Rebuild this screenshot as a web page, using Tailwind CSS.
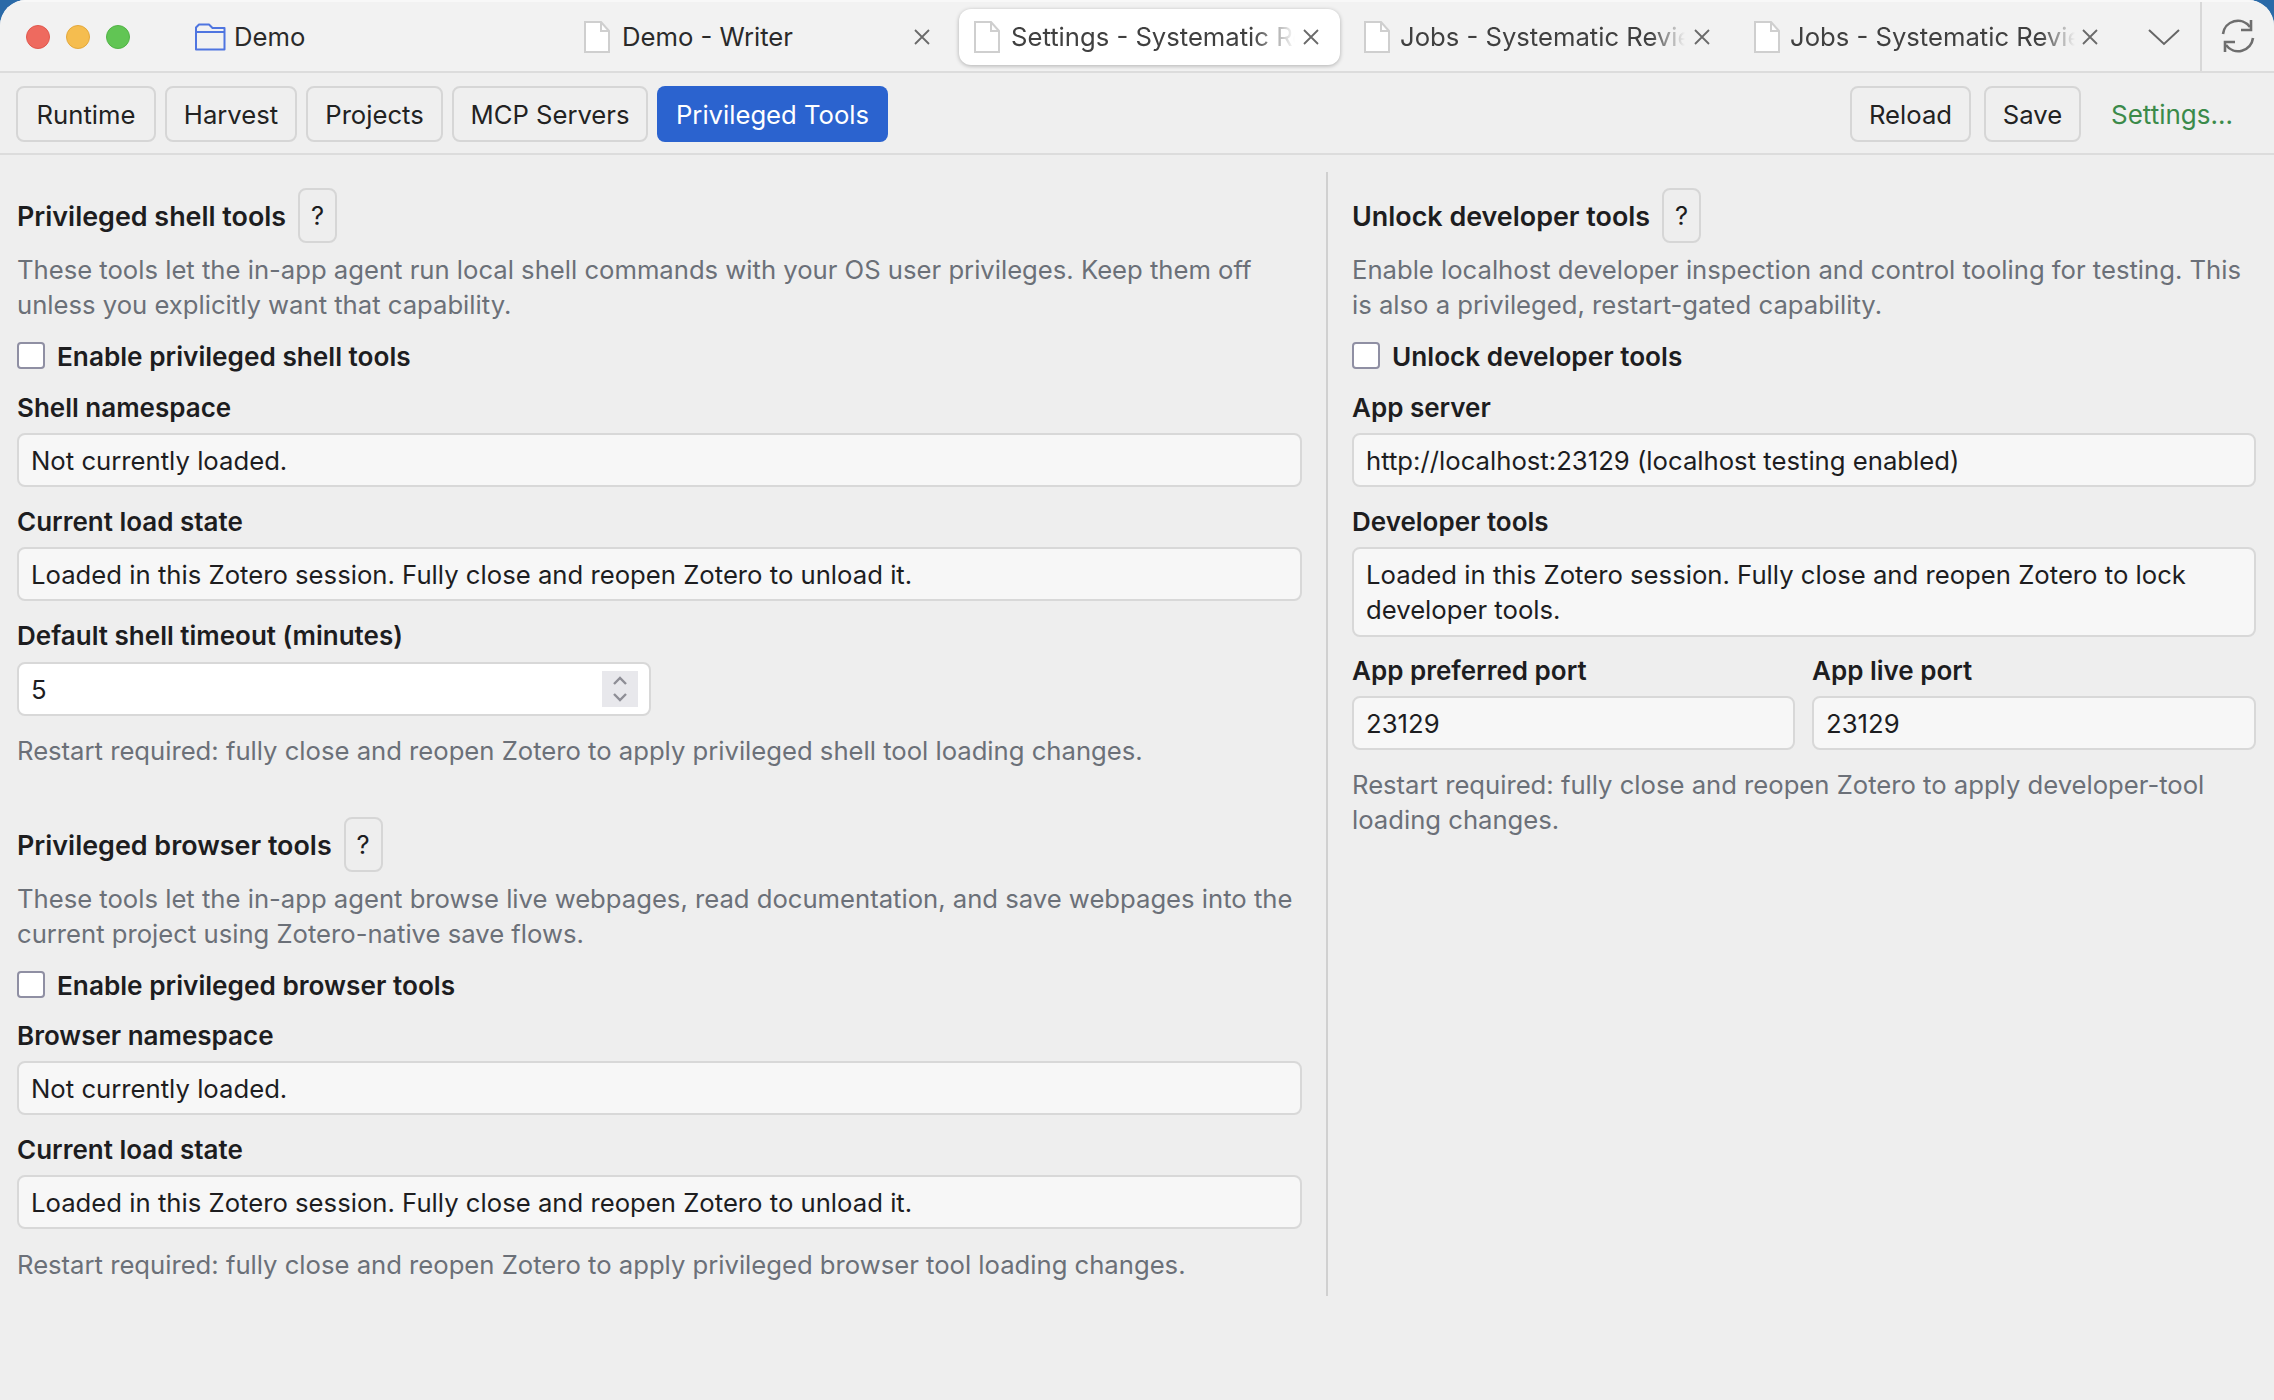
<!DOCTYPE html>
<html lang="en">
<head>
<meta charset="UTF-8">
<title>Settings - Systematic Review</title>
<script src="https://cdn.jsdelivr.net/npm/@tailwindcss/browser@4"></script>
</head>
<body class="bg-[#2a6aa8] font-['Inter',sans-serif] text-[25.65px] leading-[35px] text-[#1d1d1f] w-[2274px] h-[1400px] overflow-hidden">
<div class="w-full h-full rounded-t-[26px] overflow-hidden bg-[#eeeeee] flex flex-col">

  <!-- title bar -->
  <div class="h-[73px] shrink-0 bg-[#f2f2f2] border-b-2 border-[#dcdcdc] border-t-2 border-t-[#f8f8f8] flex items-center relative">
    <div class="flex gap-[16px] pl-[26px] w-[179px] shrink-0">
      <span class="w-[24px] h-[24px] rounded-full bg-[#ee6a5f] border border-[#e0584e]"></span>
      <span class="w-[24px] h-[24px] rounded-full bg-[#f5bd4f] border border-[#e3a83c]"></span>
      <span class="w-[24px] h-[24px] rounded-full bg-[#61c554] border border-[#52b347]"></span>
    </div>
    <div class="flex gap-[9px]">
      <!-- Demo -->
      <div class="w-[381px] h-[56px] flex items-center pl-[15px]">
        <svg class="w-[32px] h-[28px] shrink-0" viewBox="0 0 32 28" fill="none" stroke="#4f75e0" stroke-width="2"><path d="M2 26.5V4.5L5 1.5H15L18.5 5H30.5V26.5H2Z" stroke-linejoin="round"/><path d="M2 9H30.5"/></svg>
        <span class="ml-[8px] text-[#2a2a2a]">Demo</span>
      </div>
      <!-- Demo - Writer -->
      <div class="w-[381px] h-[56px] flex items-center pl-[15px] relative">
        <svg class="w-[26px] h-[32px] shrink-0" viewBox="0 0 26 32" fill="#fff" stroke="#cfcfcf" stroke-width="2"><path d="M1 1H17L25 10V31H1Z"/><path d="M17 1V10H25" fill="none"/></svg>
        <span class="ml-[12px] text-[#2a2a2a]">Demo - Writer</span>
        <svg class="w-[16px] h-[16px] absolute left-[345px] top-[20px]" viewBox="0 0 16 16" stroke="#6a6a6a" stroke-width="1.8"><path d="M1 1L15 15M15 1L1 15"/></svg>
      </div>
      <!-- Settings, active -->
      <div class="w-[381px] h-[56px] flex items-center pl-[15px] relative bg-white rounded-[12px] shadow-[0_1px_4px_rgba(0,0,0,0.28)]">
        <svg class="w-[26px] h-[32px] shrink-0" viewBox="0 0 26 32" fill="#fff" stroke="#cfcfcf" stroke-width="2"><path d="M1 1H17L25 10V31H1Z"/><path d="M17 1V10H25" fill="none"/></svg>
        <span class="ml-[11px] w-[284px] overflow-hidden whitespace-nowrap text-[#404040] [mask-image:linear-gradient(to_right,black_85%,transparent)]">Settings - Systematic Review</span>
        <svg class="w-[16px] h-[16px] absolute left-[344px] top-[20px]" viewBox="0 0 16 16" stroke="#6a6a6a" stroke-width="1.8"><path d="M1 1L15 15M15 1L1 15"/></svg>
      </div>
      <!-- Jobs -->
      <div class="w-[381px] h-[56px] flex items-center pl-[15px] relative">
        <svg class="w-[26px] h-[32px] shrink-0" viewBox="0 0 26 32" fill="#fff" stroke="#cfcfcf" stroke-width="2"><path d="M1 1H17L25 10V31H1Z"/><path d="M17 1V10H25" fill="none"/></svg>
        <span class="ml-[10px] w-[285px] overflow-hidden whitespace-nowrap text-[#404040] [mask-image:linear-gradient(to_right,black_88%,transparent)]">Jobs - Systematic Review</span>
        <svg class="w-[16px] h-[16px] absolute left-[345px] top-[20px]" viewBox="0 0 16 16" stroke="#6a6a6a" stroke-width="1.8"><path d="M1 1L15 15M15 1L1 15"/></svg>
      </div>
      <!-- Jobs -->
      <div class="w-[381px] h-[56px] flex items-center pl-[15px] relative">
        <svg class="w-[26px] h-[32px] shrink-0" viewBox="0 0 26 32" fill="#fff" stroke="#cfcfcf" stroke-width="2"><path d="M1 1H17L25 10V31H1Z"/><path d="M17 1V10H25" fill="none"/></svg>
        <span class="ml-[10px] w-[285px] overflow-hidden whitespace-nowrap text-[#404040] [mask-image:linear-gradient(to_right,black_88%,transparent)]">Jobs - Systematic Review</span>
        <svg class="w-[16px] h-[16px] absolute left-[343px] top-[20px]" viewBox="0 0 16 16" stroke="#6a6a6a" stroke-width="1.8"><path d="M1 1L15 15M15 1L1 15"/></svg>
      </div>
    </div>
    <svg class="w-[32px] h-[18px] absolute left-[2148px] top-[26px]" viewBox="0 0 32 18" fill="none" stroke="#666" stroke-width="2"><path d="M1 2L16 16L31 2"/></svg>
    <div class="absolute left-[2200px] top-0 bottom-0 w-[2px] bg-[#d8d8d8]"></div>
    <svg class="w-[36px] h-[36px] absolute left-[2220px] top-[16px]" viewBox="0 0 36 36" fill="none" stroke="#6e6e6e" stroke-width="2.6"><path d="M3 16A15 15 0 0 1 30 9"/><path d="M31 2V12H21"/><path d="M33 20A15 15 0 0 1 6 27"/><path d="M5 34V24H15"/></svg>
  </div>

  <!-- toolbar -->
  <div class="h-[82px] shrink-0 border-b-2 border-[#dcdcdc] bg-[#efefef] flex items-center pt-[2px] pl-[16px] pr-[41px] gap-[9px]">
    <button class="h-[56px] w-[140px] rounded-[8px] border-2 border-[#d6d6d6] text-[#222]">Runtime</button>
    <button class="h-[56px] w-[132px] rounded-[8px] border-2 border-[#d6d6d6] text-[#222]">Harvest</button>
    <button class="h-[56px] w-[137px] rounded-[8px] border-2 border-[#d6d6d6] text-[#222]">Projects</button>
    <button class="h-[56px] w-[196px] rounded-[8px] border-2 border-[#d6d6d6] text-[#222]">MCP Servers</button>
    <button class="h-[56px] w-[231px] rounded-[8px] bg-[#2b63cf] text-white">Privileged Tools</button>
    <button class="h-[56px] w-[121px] rounded-[8px] border-2 border-[#d6d6d6] text-[#222] ml-auto">Reload</button>
    <button class="h-[56px] w-[97px] rounded-[8px] border-2 border-[#d6d6d6] text-[#222] ml-[4px]">Save</button>
    <span class="text-[#3b8a4a] text-[26px] ml-[21px]">Settings...</span>
  </div>

  <!-- panels -->
  <div class="flex pl-[17px] pr-[18px] pt-[17px]">
    <!-- left column -->
    <div class="w-[1285px] pt-[16px] flex flex-col">
      <div class="flex items-center h-[55px] gap-[12px]">
        <h2 class="font-semibold text-[26.9px] pt-[2px]">Privileged shell tools</h2>
        <button class="w-[39px] h-[55px] rounded-[8px] border-2 border-[#d6d6d6]">?</button>
      </div>
      <p class="mt-[9px] text-[#6b7078]">These tools let the in-app agent run local shell commands with your OS user privileges. Keep them off unless you explicitly want that capability.</p>
      <label class="mt-[16px] h-[35px] flex items-center gap-[12px] font-semibold text-[26.2px]">
        <span class="w-[28px] h-[27px] rounded-[4px] bg-white border-2 border-[#8f8fa3]"></span>
        <span class="pt-[1px]">Enable privileged shell tools</span>
      </label>
      <div class="mt-[17px] font-semibold text-[26px]">Shell namespace</div>
      <div class="mt-[8px] h-[54px] flex items-center px-[12px] bg-[#f7f7f7] border-2 border-[#d8d8d8] rounded-[8px] text-[25.7px]">Not currently loaded.</div>
      <div class="mt-[17px] font-semibold text-[26px]">Current load state</div>
      <div class="mt-[8px] h-[54px] flex items-center px-[12px] bg-[#f7f7f7] border-2 border-[#d8d8d8] rounded-[8px] text-[25.7px]">Loaded in this Zotero session. Fully close and reopen Zotero to unload it.</div>
      <div class="mt-[17px] font-semibold text-[26px]">Default shell timeout (minutes)</div>
      <div class="mt-[9px] w-[634px] h-[54px] flex items-center justify-between pl-[12px] pr-[11px] bg-white border-2 border-[#d8d8d8] rounded-[8px]">
        5
        <span class="w-[36px] h-[36px] bg-[#e8e8ec] flex items-center justify-center">
          <svg class="w-[16px] h-[28px]" viewBox="0 0 16 28" fill="none" stroke="#8e8e96" stroke-width="2.4"><path d="M2 9L8 3L14 9"/><path d="M2 19L8 25L14 19"/></svg>
        </span>
      </div>
      <p class="mt-[17px] text-[#6b7078]">Restart required: fully close and reopen Zotero to apply privileged shell tool loading changes.</p>

      <div class="mt-[49px] flex items-center h-[55px] gap-[12px]">
        <h2 class="font-semibold text-[26.9px] pt-[2px]">Privileged browser tools</h2>
        <button class="w-[39px] h-[55px] rounded-[8px] border-2 border-[#d6d6d6]">?</button>
      </div>
      <p class="mt-[9px] text-[#6b7078]">These tools let the in-app agent browse live webpages, read documentation, and save webpages into the current project using Zotero-native save flows.</p>
      <label class="mt-[16px] h-[35px] flex items-center gap-[12px] font-semibold text-[26.2px]">
        <span class="w-[28px] h-[27px] rounded-[4px] bg-white border-2 border-[#8f8fa3]"></span>
        <span class="pt-[1px]">Enable privileged browser tools</span>
      </label>
      <div class="mt-[16px] font-semibold text-[26px]">Browser namespace</div>
      <div class="mt-[8px] h-[54px] flex items-center px-[12px] bg-[#f7f7f7] border-2 border-[#d8d8d8] rounded-[8px] text-[25.7px]">Not currently loaded.</div>
      <div class="mt-[17px] font-semibold text-[26px]">Current load state</div>
      <div class="mt-[8px] h-[54px] flex items-center px-[12px] bg-[#f7f7f7] border-2 border-[#d8d8d8] rounded-[8px] text-[25.7px]">Loaded in this Zotero session. Fully close and reopen Zotero to unload it.</div>
      <p class="mt-[18px] text-[#6b7078]">Restart required: fully close and reopen Zotero to apply privileged browser tool loading changes.</p>
    </div>

    <div class="w-[2px] h-[1124px] bg-[#d0d0d0] ml-[24px] shrink-0"></div>

    <!-- right column -->
    <div class="ml-[24px] flex-1 pt-[16px] flex flex-col">
      <div class="flex items-center h-[55px] gap-[12px]">
        <h2 class="font-semibold text-[26.9px] pt-[2px]">Unlock developer tools</h2>
        <button class="w-[39px] h-[55px] rounded-[8px] border-2 border-[#d6d6d6]">?</button>
      </div>
      <p class="mt-[9px] text-[#6b7078]">Enable localhost developer inspection and control tooling for testing. This is also a privileged, restart-gated capability.</p>
      <label class="mt-[16px] h-[35px] flex items-center gap-[12px] font-semibold text-[26.2px]">
        <span class="w-[28px] h-[27px] rounded-[4px] bg-white border-2 border-[#8f8fa3]"></span>
        <span class="pt-[1px]">Unlock developer tools</span>
      </label>
      <div class="mt-[17px] font-semibold text-[26px]">App server</div>
      <div class="mt-[8px] h-[54px] flex items-center px-[12px] bg-[#f7f7f7] border-2 border-[#d8d8d8] rounded-[8px] text-[25.7px]">http://localhost:23129 (localhost testing enabled)</div>
      <div class="mt-[17px] font-semibold text-[26px]">Developer tools</div>
      <div class="mt-[8px] h-[90px] flex items-center px-[12px] bg-[#f7f7f7] border-2 border-[#d8d8d8] rounded-[8px] text-[25.7px]">Loaded in this Zotero session. Fully close and reopen Zotero to lock developer tools.</div>
      <div class="mt-[16px] grid grid-cols-[443px_1fr] gap-x-[17px]">
        <div class="font-semibold text-[26px]">App preferred port</div>
        <div class="font-semibold text-[26px]">App live port</div>
        <div class="mt-[8px] h-[54px] flex items-center px-[12px] bg-[#f7f7f7] border-2 border-[#d8d8d8] rounded-[8px] text-[25.7px]">23129</div>
        <div class="mt-[8px] h-[54px] flex items-center px-[12px] bg-[#f7f7f7] border-2 border-[#d8d8d8] rounded-[8px] text-[25.7px]">23129</div>
      </div>
      <p class="mt-[17px] text-[#6b7078]">Restart required: fully close and reopen Zotero to apply developer-tool loading changes.</p>
    </div>
  </div>
</div>
</body>
</html>
